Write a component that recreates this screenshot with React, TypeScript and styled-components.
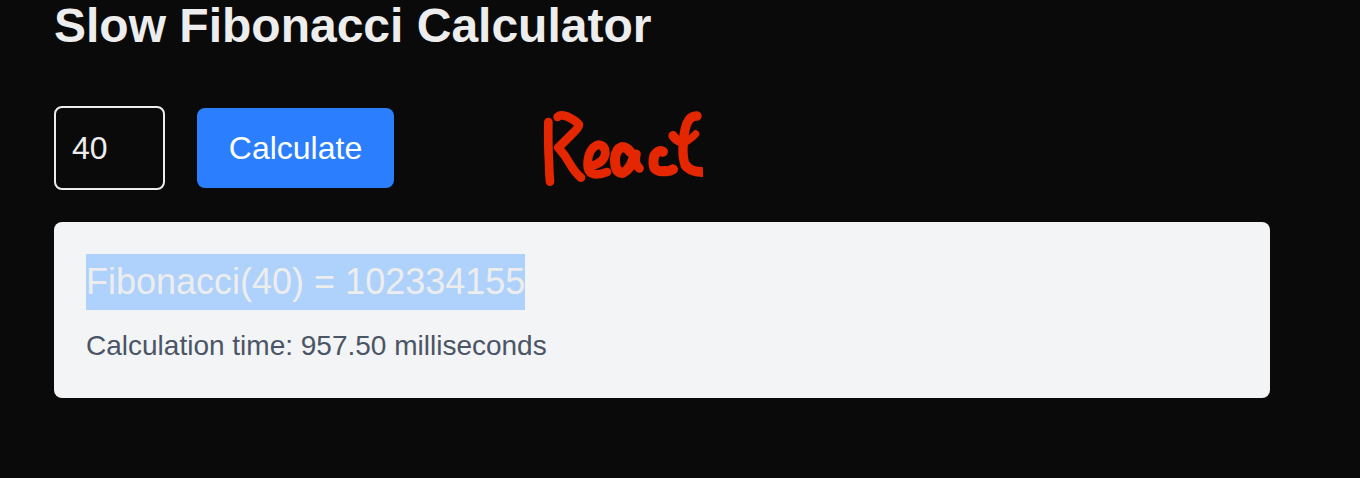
import React from "react";
import styled, { createGlobalStyle } from "styled-components";

const GlobalStyle = createGlobalStyle`
  * { box-sizing: border-box; }
  body { margin: 0; background: #0a0a0a; color: #ededed; font-family: "Liberation Sans", Arial, sans-serif; overflow: hidden; }
`;
const Page = styled.main`
  height: 478px; padding: 0 90px 0 54px; overflow: hidden;
`;
const Title = styled.h1`
  margin: 0; padding-top: 2px; height: 106px; font-size: 48px; line-height: 48px; font-weight: 700; white-space: nowrap;
`;
const Controls = styled.div`
  display: flex; align-items: center; height: 84px; gap: 32px;
`;
const NumberInput = styled.input`
  width: 111px; height: 84px; padding: 0 16px; border: 2px solid #ededed; border-radius: 8px;
  background: transparent; color: #ededed; font: 32px "Liberation Sans", Arial, sans-serif; outline: none;
`;
const Button = styled.button`
  width: 197px; height: 80px; padding: 0; border: 0; border-radius: 8px; background: #2b7fff; color: #fff;
  font: 32px "Liberation Sans", Arial, sans-serif;
`;
const Note = styled.svg`
  margin-left: 104px; width: 190px; height: 84px; flex: none; overflow: visible;
`;
const Result = styled.section`
  margin-top: 32px; height: 176px; padding: 32px; border-radius: 8px; background: #f3f4f6;
`;
const Value = styled.p`
  margin: 0; width: fit-content; height: 56px; line-height: 56px; font-size: 36px; background: #afd2fc; white-space: nowrap;
`;
const Time = styled.p`
  margin: 16px 0 0; font-size: 28px; line-height: 40px; color: #4a5565;
`;

export default function App() {
  return (
    <Page>
      <GlobalStyle />
      <Title>Slow Fibonacci Calculator</Title>
      <Controls>
        <NumberInput defaultValue="40" />
        <Button>Calculate</Button>
        <Note viewBox="0 18 570 252" fill="none" stroke="#e42700" strokeWidth="30" strokeLinecap="round" strokeLinejoin="round" role="img" aria-label="React">
          <path strokeWidth="26" d="M55 66 Q54 140 57 185 Q58 222 60 245" />
          <path strokeWidth="26" d="M83 51 Q90 42 110 49 Q135 60 147 74 Q146 84 125 103 L85 143 Q104 164 119 190 Q134 217 153 233" />
          <path strokeWidth="26" d="M181 198 Q222 190 226 160 Q226 136 205 134 Q179 141 173 183 Q169 222 198 223 Q215 223 231 216" />
          <path d="M302 157 Q291 141 276 141 Q257 148 255 177 Q254 217 278 219 Q304 207 313 164" />
          <path strokeWidth="27" d="M319 162 Q311 191 328 205" />
          <path d="M399 155 Q385 148 373 167 Q367 190 374 205 Q386 217 404 213 Q418 215 429 208" />
          <path strokeWidth="28" d="M501 48 Q480 47 470 72 Q460 100 459 145 Q458 178 467 198" />
          <path strokeLinecap="butt" d="M464 192 Q479 217 519 216" />
          <path strokeWidth="28" d="M429 107 Q438 121 452 124" />
          <path strokeWidth="22" d="M452 125 Q467 128 477 119 Q488 112 497 102" />
        </Note>
      </Controls>
      <Result>
        <Value>Fibonacci(40) = 102334155</Value>
        <Time>Calculation time: 957.50 milliseconds</Time>
      </Result>
    </Page>
  );
}
